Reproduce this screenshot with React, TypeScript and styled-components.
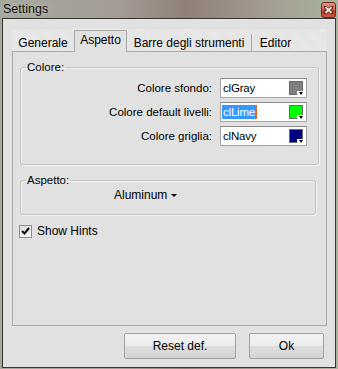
import React from "react";
import styled, { createGlobalStyle } from "styled-components";

const GlobalStyle = createGlobalStyle`
  body {
    margin: 0;
    font-family: "Liberation Sans", Arial, sans-serif;
    color: #000;
  }
`;

const Window = styled.div`
  width: 338px;
  height: 369px;
  display: flex;
  flex-direction: column;
  background: linear-gradient(90deg, #a4a89d 0%, #a49c95 35%, #8f7f79 55%, #a29b90 78%, #a9b39e 100%);
  overflow: hidden;
`;

const TitleBar = styled.div`
  height: 18px;
  display: flex;
  align-items: center;
  justify-content: space-between;
  padding: 0 2px 0 3px;
`;

const Caption = styled.span`
  font-size: 12.5px;
  color: #111;
  text-shadow: 0 0 6px rgba(255, 255, 255, 0.5);
`;

const CloseButton = styled.div`
  width: 15px;
  height: 16px;
  margin-top: 1px;
  border: 1px solid #6e2a22;
  border-radius: 3px;
  box-sizing: border-box;
  background: linear-gradient(#e39a86 0%, #d0604c 45%, #bb3a27 55%, #c9583c 100%);
  display: flex;
  align-items: center;
  justify-content: center;
`;

const Frame = styled.div`
  flex: 1;
  margin: 0 2px 1px 2px;
  border: 1px solid #353535;
  background: #e1e1e1;
  display: flex;
  flex-direction: column;
  padding: 10px 8px 0 9px;
`;

const TabStrip = styled.div`
  height: 23px;
  display: flex;
  align-items: flex-end;
  margin-bottom: -1px;
  background: repeating-linear-gradient(45deg, #e9e9e9 0px, #e9e9e9 1px, #e3e3e3 1px, #e3e3e3 2px);
`;

const Tab = styled.div<{ $w: number; $active?: boolean; $sep?: boolean }>`
  width: ${(p) => p.$w}px;
  height: ${(p) => (p.$active ? 22 : 18)}px;
  box-sizing: border-box;
  display: flex;
  align-items: center;
  justify-content: center;
  font-size: 12px;
  position: relative;
  z-index: ${(p) => (p.$active ? 1 : 0)};
  background: ${(p) => (p.$active ? "#e1e1e1" : "transparent")};
  border: ${(p) => (p.$active ? "1px solid #a9a9a9" : "none")};
  border-bottom: none;
  border-left: ${(p) => (p.$sep ? "1px solid #a9a9a9" : p.$active ? "1px solid #a9a9a9" : "none")};
  padding-bottom: ${(p) => (p.$active ? 3 : 0)}px;
`;

const Panel = styled.div`
  flex: 1;
  border: 1px solid #aaaaaa;
  display: flex;
  flex-direction: column;
  align-items: flex-start;
`;

const Group = styled.fieldset<{ $right: number; $bottom: number }>`
  align-self: stretch;
  margin: 8px ${(p) => p.$right}px 0 7px;
  padding: 4px 11px ${(p) => p.$bottom}px 5px;
  border: 1px solid #c2c2c2;
  border-radius: 3px;
  box-shadow: inset 1px 1px 0 #f4f4f4, 1px 1px 0 #f4f4f4;
  min-inline-size: 0;
`;

const Legend = styled.legend`
  font-size: 11.5px;
  line-height: 14px;
  padding: 0 1px;
`;

const Rows = styled.div`
  display: flex;
  flex-direction: column;
  align-items: flex-end;
  gap: 4px;
`;

const Row = styled.div`
  display: flex;
  align-items: center;
  gap: 8px;
`;

const FieldLabel = styled.span`
  font-size: 11.5px;
`;

const ColorBox = styled.div`
  width: 87px;
  height: 20px;
  box-sizing: border-box;
  border: 1px solid #a3a3a3;
  border-top-color: #8a8a8a;
  background: #fff;
  display: flex;
  align-items: center;
  justify-content: space-between;
  padding: 0 3px 0 1px;
  font-size: 11.5px;
`;

const ColorName = styled.span<{ $selected?: boolean }>`
  letter-spacing: -0.2px;
  padding: 0 1px;
  line-height: 14px;
  background: ${(p) => (p.$selected ? "#3399ff" : "transparent")};
  color: ${(p) => (p.$selected ? "#fff" : "#000")};
  border-right: 1px solid ${(p) => (p.$selected ? "#d86a1a" : "transparent")};
`;

const Swatch = styled.span<{ $color: string }>`
  width: 14px;
  height: 14px;
  box-sizing: border-box;
  border: 1px solid #6a6a6a;
  background: ${(p) => p.$color};
  position: relative;
`;

const SwatchArrow = styled.span`
  position: absolute;
  right: -2px;
  bottom: -2px;
  width: 7px;
  height: 5px;
  background: #fff;
  display: flex;
  align-items: center;
  justify-content: center;

  &::after {
    content: "";
    border-top: 3px solid #000;
    border-left: 2.5px solid transparent;
    border-right: 2.5px solid transparent;
  }
`;

const SkinPicker = styled.div`
  margin: -3px 0 0 88px;
  font-size: 12px;
  line-height: 14px;
  display: flex;
  align-items: center;
  gap: 4px;

  &::after {
    content: "";
    border-top: 3px solid #000;
    border-left: 3px solid transparent;
    border-right: 3px solid transparent;
  }
`;

const HintsRow = styled.label`
  display: flex;
  align-items: center;
  gap: 5px;
  margin: 9px 0 0 6px;
  font-size: 12px;
`;

const CheckBox = styled.span`
  width: 13px;
  height: 13px;
  box-sizing: border-box;
  border: 1px solid #8e8f8f;
  background: linear-gradient(#dedede, #f5f5f5);
  display: flex;
  align-items: center;
  justify-content: center;
`;

const ButtonBar = styled.div`
  display: flex;
  justify-content: flex-end;
  gap: 13px;
  margin: 7px 3px 0 0;
  height: 34px;
`;

const Button = styled.button<{ $w: number }>`
  width: ${(p) => p.$w}px;
  height: 26px;
  border: 1px solid #a2a2a2;
  border-radius: 2px;
  background: linear-gradient(#f2f2f2 0%, #ebebeb 50%, #dddddd 51%, #d4d4d4 100%);
  font-family: "Liberation Sans", Arial, sans-serif;
  font-size: 12px;
  color: #000;
  padding: 0;
`;

const swatches = [
  { label: "Colore sfondo:", name: "clGray", color: "#808080" },
  { label: "Colore default livelli:", name: "clLime", color: "#00ff00", selected: true },
  { label: "Colore griglia:", name: "clNavy", color: "#000080" },
];

export default function App() {
  return (
    <Window>
      <GlobalStyle />
      <TitleBar>
        <Caption>Settings</Caption>
        <CloseButton>
          <svg width="9" height="8" viewBox="0 0 9 8">
            <path d="M1 1 L8 7 M8 1 L1 7" stroke="#5a1a12" strokeWidth="3.2" strokeLinecap="square" />
            <path d="M1.5 1.2 L7.5 6.8 M7.5 1.2 L1.5 6.8" stroke="#fff" strokeWidth="1.8" />
          </svg>
        </CloseButton>
      </TitleBar>
      <Frame>
        <TabStrip>
          <Tab $w={62}>Generale</Tab>
          <Tab $w={53} $active>Aspetto</Tab>
          <Tab $w={124}>Barre degli strumenti</Tab>
          <Tab $w={48} $sep>Editor</Tab>
        </TabStrip>
        <Panel>
          <Group $right={7} $bottom={18}>
            <Legend>Colore:</Legend>
            <Rows>
              {swatches.map((s) => (
                <Row key={s.name}>
                  <FieldLabel>{s.label}</FieldLabel>
                  <ColorBox>
                    <ColorName $selected={s.selected}>{s.name}</ColorName>
                    <Swatch $color={s.color}>
                      <SwatchArrow />
                    </Swatch>
                  </ColorBox>
                </Row>
              ))}
            </Rows>
          </Group>
          <Group $right={10} $bottom={12}>
            <Legend>Aspetto:</Legend>
            <SkinPicker>Aluminum</SkinPicker>
          </Group>
          <HintsRow>
            <CheckBox>
              <svg width="9" height="8" viewBox="0 0 9 8">
                <path d="M1 4 L3.5 6.5 L8 1" fill="none" stroke="#111" strokeWidth="2" />
              </svg>
            </CheckBox>
            Show Hints
          </HintsRow>
        </Panel>
        <ButtonBar>
          <Button $w={112}>Reset def.</Button>
          <Button $w={75}>Ok</Button>
        </ButtonBar>
      </Frame>
    </Window>
  );
}
